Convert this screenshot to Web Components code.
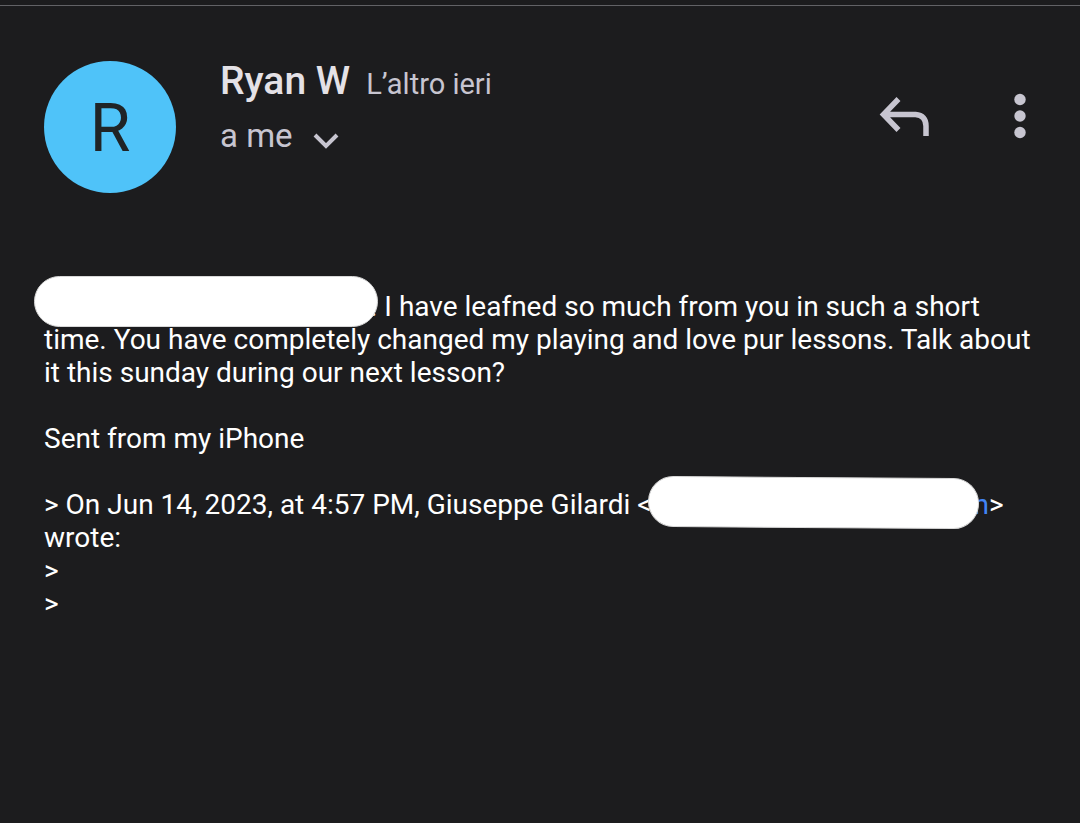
<!DOCTYPE html>
<html lang="it">
<head>
<meta charset="utf-8">
<meta name="viewport" content="width=device-width, initial-scale=1">
<title>Ryan W</title>
<style>
  body { margin: 0; background: #1c1c1e; color: #fff; font-family: Roboto, sans-serif; }
</style>
</head>
<body>
<mail-message>
  <mail-header slot="header">
    <mail-avatar slot="avatar">R</mail-avatar>
    <span slot="name">Ryan W</span>
    <span slot="date">L’altro ieri</span>
    <span slot="recipient">a me</span>
  </mail-header>
  <mail-body></mail-body>
</mail-message>
<script>
function define(name, html) {
  const template = document.createElement('template');
  template.innerHTML = html;
  customElements.define(name, class extends HTMLElement {
    constructor() {
      super();
      this.attachShadow({ mode: 'open' }).append(template.content.cloneNode(true));
    }
  });
}

define('mail-avatar', `
  <style>
    :host { display: flex; flex: none; align-items: center; justify-content: center; box-sizing: border-box;
      width: 132px; height: 132px; padding-top: 4px; border-radius: 50%; background: #4fc3f9; color: #202426;
      font-size: 66px; line-height: 80px; }
  </style>
  <slot></slot>`);

define('mail-header', `
  <style>
    :host { display: flex; align-items: flex-start; gap: 44px; color: #c7c5d0; }
    .who { flex: 1; min-width: 0; }
    .top { display: flex; align-items: baseline; gap: 16px; line-height: 40px; }
    h1 { margin: 0; font-size: 39px; font-weight: 500; color: #e4e1e6; }
    time { font-size: 29px; }
    button { display: flex; align-items: center; padding: 0; border: 0; background: none;
      color: inherit; font: inherit; cursor: pointer; }
    .to { margin-top: 12px; gap: 20px; font-size: 33px; line-height: 40px; }
    .to svg { margin-top: 12px; }
    .actions { display: flex; gap: 68px; padding-top: 30px; }
    svg { display: block; fill: none; stroke: currentColor; }
  </style>
  <slot name="avatar"></slot>
  <div class="who">
    <div class="top"><h1><slot name="name"></slot></h1><time><slot name="date"></slot></time></div>
    <button class="to" type="button"><slot name="recipient"></slot>
      <svg width="28" height="20" viewBox="0 0 28 20" stroke-width="4"><path d="M2 3 13 14 24 3"/></svg>
    </button>
  </div>
  <div class="actions">
    <button type="button" aria-label="Rispondi">
      <svg width="58" height="50" viewBox="0 0 58 50" stroke-width="5.5"><path d="M20.500 8 5.500 23.500 20.500 39M6 23.500H37.500Q48 24.500 48 35V45"/></svg>
    </button>
    <button type="button" aria-label="Altre opzioni">
      <svg width="32" height="50" viewBox="0 0 32 50"><g fill="currentColor" stroke="none"><circle cx="16" cy="8.500" r="5.700"/><circle cx="16" cy="25" r="5.700"/><circle cx="16" cy="41.500" r="5.700"/></g></svg>
    </button>
  </div>`);

/* A gap in the running text, painted over with a white marker stroke. */
define('redacted-text', `
  <style>
    :host { display: inline-block; position: relative; width: var(--gap); height: 20px; }
    div { position: absolute; top: var(--top); left: var(--left); width: var(--stroke); height: 51px;
      box-sizing: border-box; border: 1px solid #d8d8d8; border-radius: 26px; background: #fff; transform: rotate(var(--tilt, 0deg)); }
  </style>
  <div></div>`);

define('mail-body', `
  <style>
    :host { display: block; font-size: 28px; line-height: 33px; overflow-wrap: break-word; }
    p { margin: 0 0 33px; }
    .lead { --gap: 326px; --left: -10px; --top: -20px; --stroke: 344px; }
    .address { --gap: 322px; --left: -4px; --top: -17px; --stroke: 331px; --tilt: .4deg; }
    a { color: #4285f4; text-decoration: none; }
  </style>
  <p><redacted-text class="lead"></redacted-text>. I have leafned so much from you in such a short time. You have completely changed my playing and love pur lessons. Talk about it this sunday during our next lesson?</p>
  <p>Sent from my iPhone</p>
  <p>&gt; On Jun 14, 2023, at 4:57 PM, Giuseppe Gilardi &lt;<redacted-text class="address"></redacted-text><a href="#">n</a>&gt; wrote:<br>&gt;<br>&gt;</p>`);

define('mail-message', `
  <style>
    :host { display: block; margin-top: 5px; padding: 55px 44px 44px; border-top: 1px solid #626266; }
    .content { margin-top: 97px; }
  </style>
  <article><slot name="header"></slot><div class="content"><slot></slot></div></article>`);
</script>
</body>
</html>
